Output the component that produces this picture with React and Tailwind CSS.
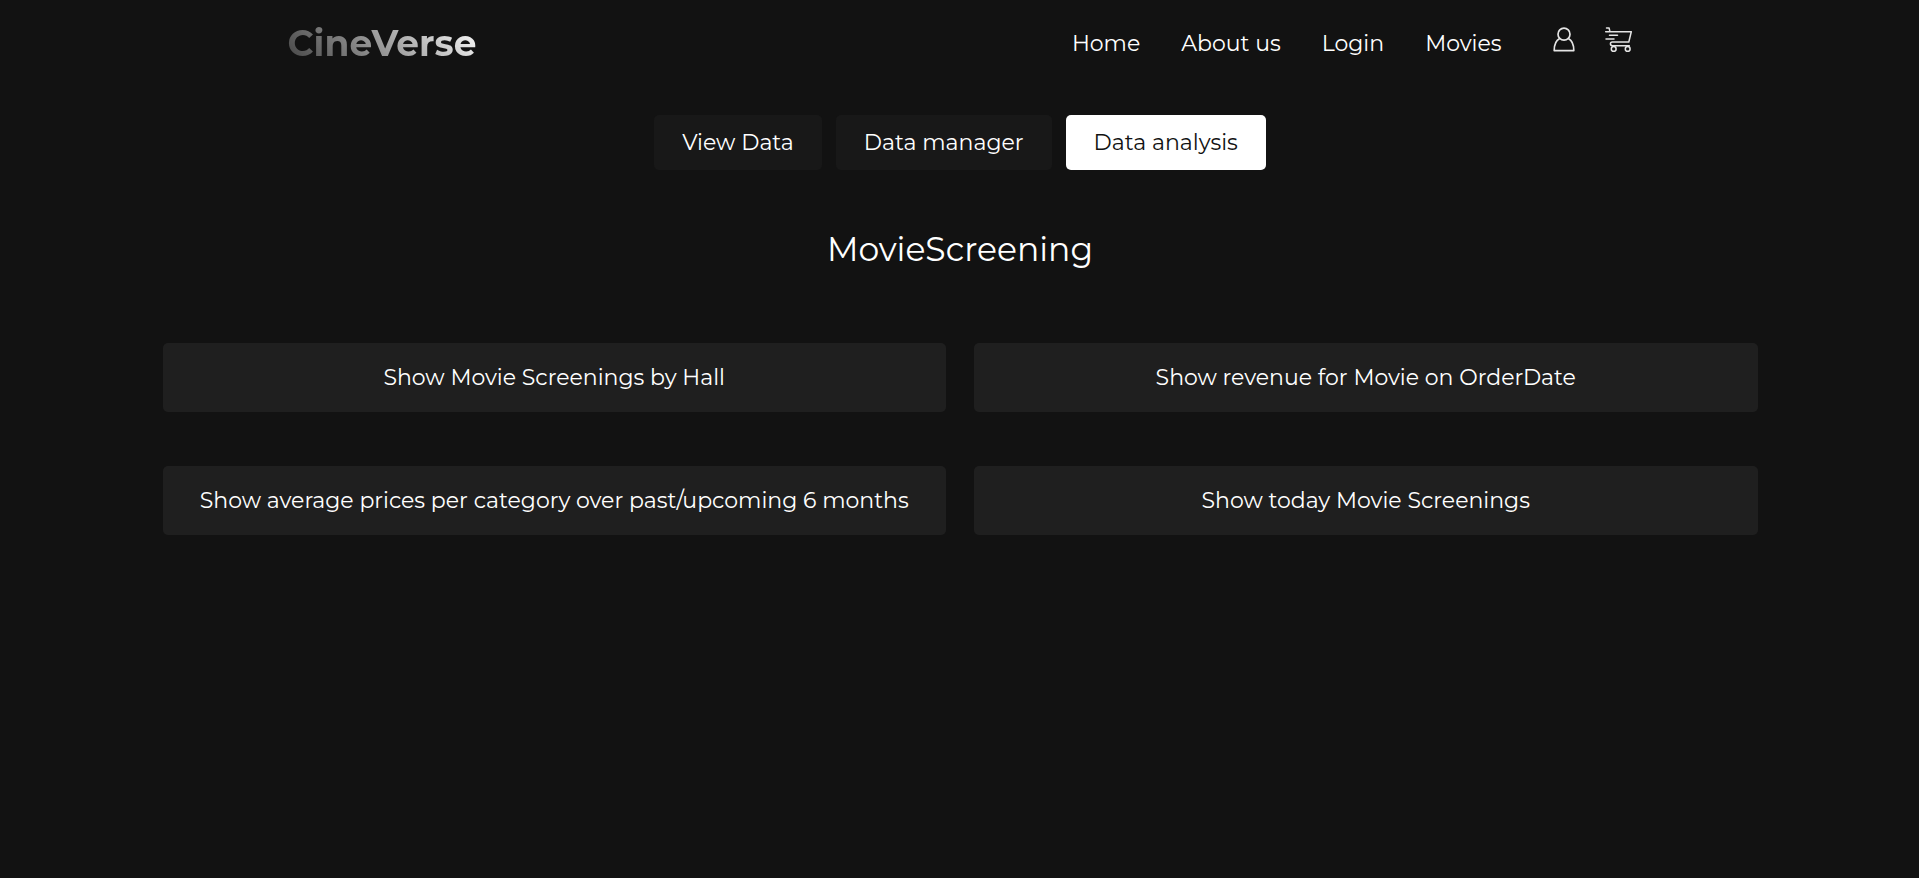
const navLinks = ["Home", "About us", "Login", "Movies"];
const tabs = [
  { label: "View Data" },
  { label: "Data manager" },
  { label: "Data analysis", active: true },
];
const reports = [
  "Show Movie Screenings by Hall",
  "Show revenue for Movie on OrderDate",
  "Show average prices per category over past/upcoming 6 months",
  "Show today Movie Screenings",
];

function UserIcon() {
  return (
    <svg width="22" height="26" viewBox="0 0 22 26" fill="none" stroke="#e4e4e4" strokeWidth="1.7" strokeLinejoin="round" aria-hidden="true">
      <circle cx="11" cy="7.2" r="6" />
      <path d="M6.6 11.6C3 13.5 1.2 17 1.2 23.6h19.6c0-6.6-1.8-10.1-5.4-12" />
    </svg>
  );
}

function CartIcon() {
  return (
    <svg width="27" height="26" viewBox="0.5 0 27 26" fill="none" stroke="#e4e4e4" strokeWidth="1.5" strokeLinecap="round" strokeLinejoin="round" aria-hidden="true">
      <path d="M2 .9h2.6l.8 3.800M1.200 4.700h25.600L24.300 15H7.800c-2.500 0-2.500 3.700 0 3.700h17" />
      <path d="M5 8.300h8M1.500 12h8" />
      <circle cx="9.2" cy="21.9" r="2.400" />
      <circle cx="23.2" cy="21.9" r="2.400" />
    </svg>
  );
}

export default function App() {
  return (
    <div className="min-h-screen bg-[#121212] font-[Montserrat,Inter,sans-serif] text-[22px] leading-7 text-white">
      <header className="mx-auto flex w-[1344px] max-w-full items-center justify-between pt-[23px]">
        <a href="#" className="bg-linear-45 from-[#434343] to-white bg-clip-text pb-0.5 text-[36px] leading-10 font-bold text-transparent">
          CineVerse
        </a>
        <div className="flex items-center gap-[51px]">
          <nav className="flex gap-[41px]">
            {navLinks.map((label) => (
              <a key={label} href="#">{label}</a>
            ))}
          </nav>
          <div className="flex gap-[30px] pb-2">
            <button type="button" aria-label="Account"><UserIcon /></button>
            <button type="button" aria-label="Cart"><CartIcon /></button>
          </div>
        </div>
      </header>
      <main className="mx-auto w-[1596px] max-w-full pl-px">
        <div className="mt-[50px] flex justify-center gap-[14px]">
          {tabs.map(({ label, active }) => (
            <button
              key={label}
              type="button"
              className={`h-[55px] rounded-[5px] px-7 ${active ? "bg-white text-[#121212]" : "bg-[#181818]"}`}
            >
              {label}
            </button>
          ))}
        </div>
        <h1 className="mt-[58px] text-center text-[33px] leading-[42px]">MovieScreening</h1>
        <div className="mt-[73px] grid grid-cols-2 gap-x-7 gap-y-[54px]">
          {reports.map((label) => (
            <button key={label} type="button" className="h-[69px] rounded-[5px] bg-[#1f1f1f]">
              {label}
            </button>
          ))}
        </div>
      </main>
    </div>
  );
}
